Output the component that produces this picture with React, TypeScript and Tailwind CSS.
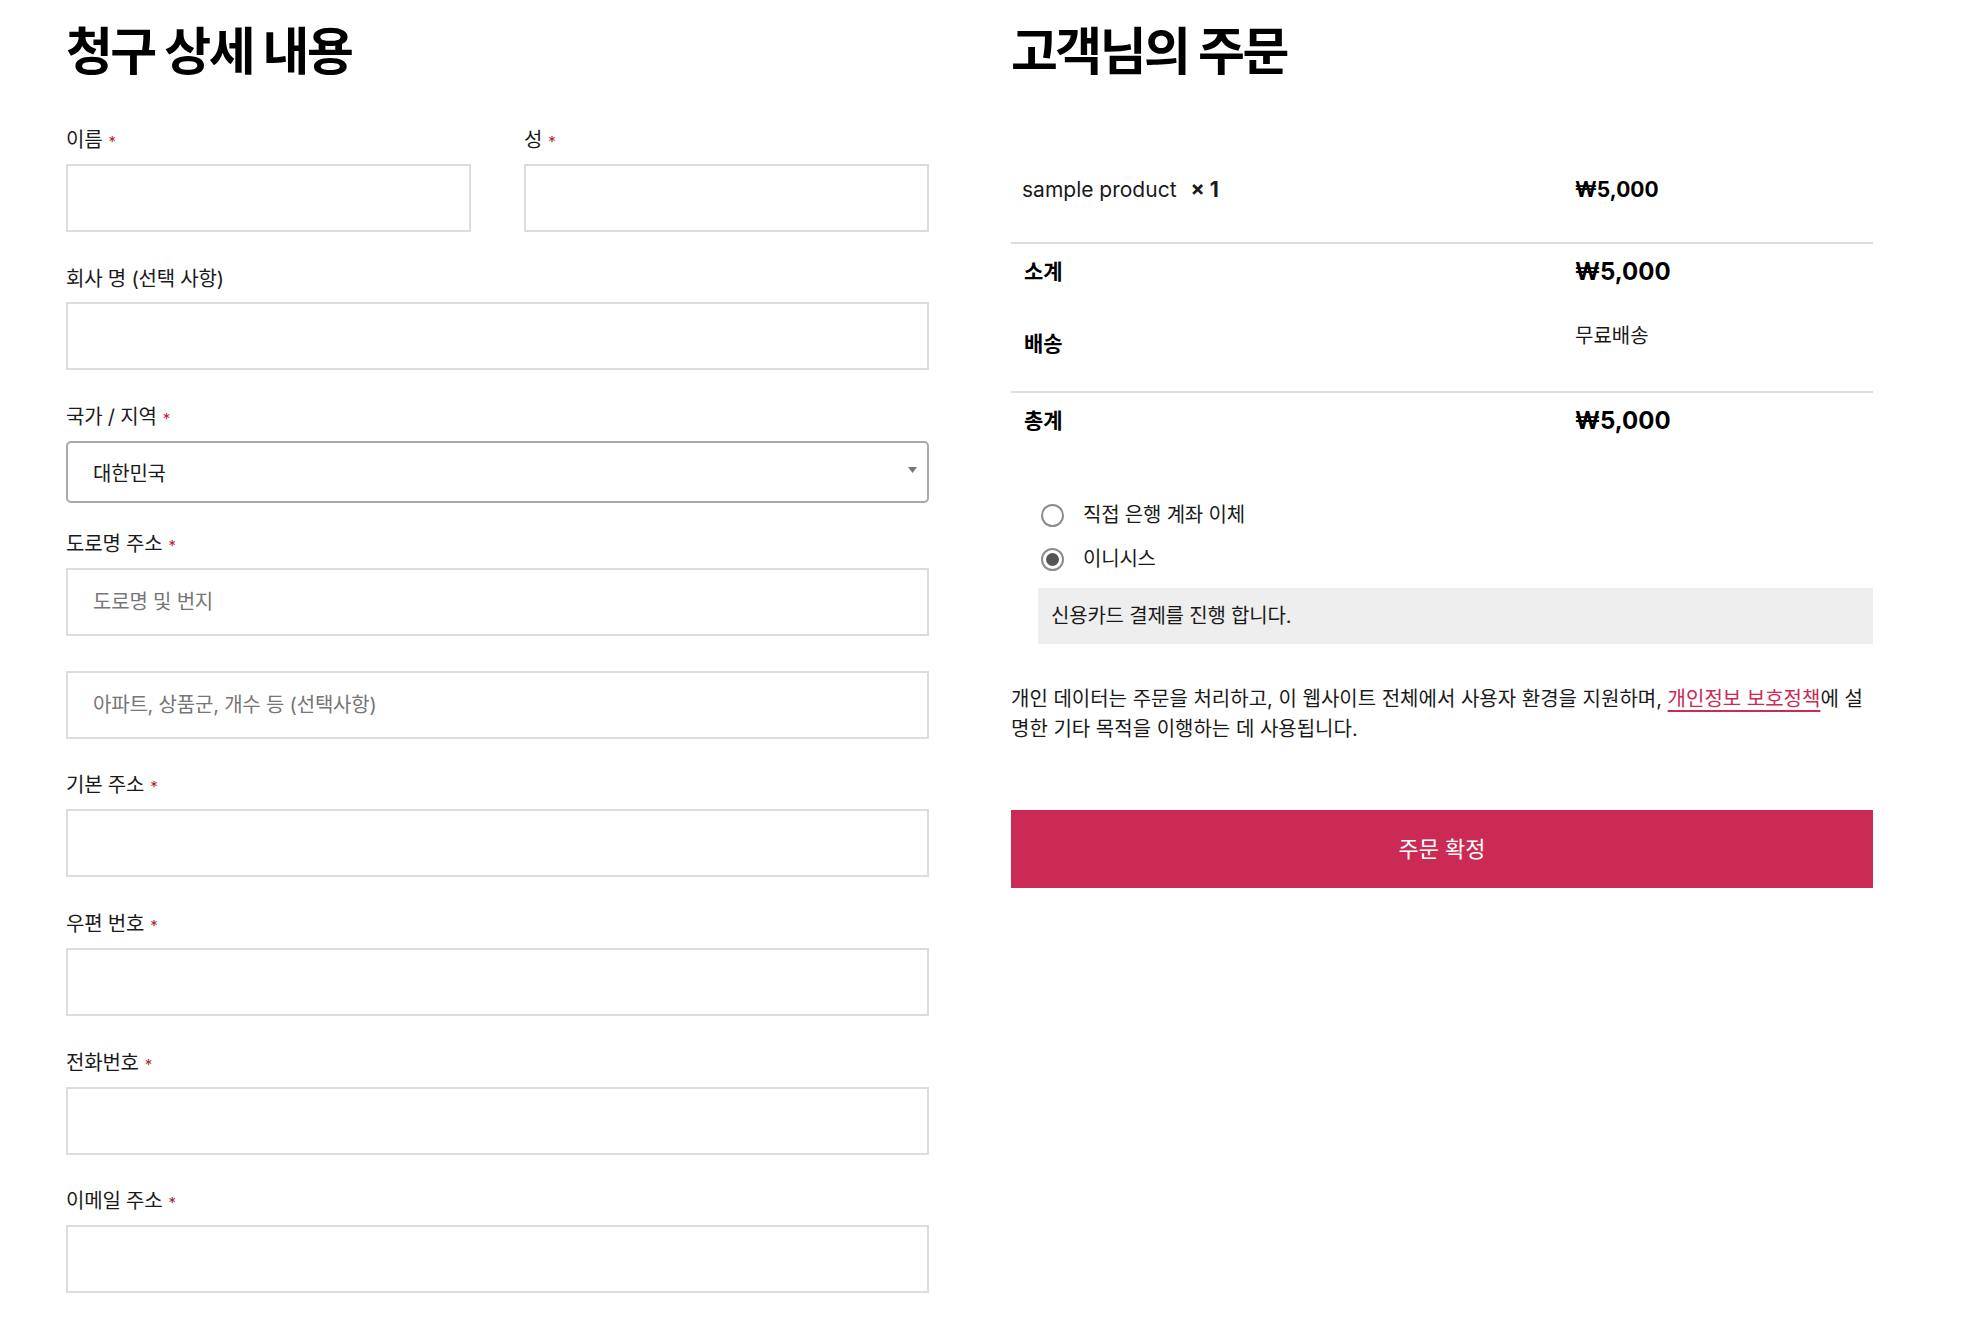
import React from "react";

const FONT = { fontFamily: 'Inter, "Noto Sans CJK KR", sans-serif' };

function Label({ text, required = true }: { text: string; required?: boolean }) {
  return (
    <div className="text-[20px] leading-[27px] text-[#1a1a1a] mb-[9px] tracking-[-0.01em]">
      {text}
      {required && <span className="text-[#b3262e] ml-[6px] text-[15px]">*</span>}
    </div>
  );
}

function Input({ placeholder }: { placeholder?: string }) {
  return (
    <div className="h-[68px] border-2 border-[#dddddd] bg-white flex items-center pl-[25px] text-[20px] tracking-[-0.01em] text-[#767676]">
      {placeholder}
    </div>
  );
}

function Field({ label, required = true, className = "" }: { label: string; required?: boolean; className?: string }) {
  return (
    <div className={className}>
      <Label text={label} required={required} />
      <Input />
    </div>
  );
}

function Radio({ checked, label }: { checked?: boolean; label: string }) {
  return (
    <div className="flex items-center h-[44px] pl-[30px]">
      <div className="w-[23px] h-[23px] rounded-full border-2 border-[#8c8c8c] flex items-center justify-center bg-white">
        {checked && <div className="w-[13px] h-[13px] rounded-full bg-[#555555]" />}
      </div>
      <span className="ml-[19px] text-[20px] tracking-[-0.01em] text-[#1a1a1a]">{label}</span>
    </div>
  );
}

export default function App() {
  return (
    <div style={FONT} className="w-[1966px] h-[1320px] bg-white overflow-hidden flex pl-[66px] text-black">
      {/* Left column */}
      <div className="w-[863px] shrink-0">
        <h1 className="text-[51px] leading-[58px] font-bold tracking-[-0.05em] pt-[23px] mb-[46px]">청구 상세 내용</h1>
        <div className="grid grid-cols-2 gap-x-[53px] mb-[34px]">
          <div>
            <Label text="이름" />
            <Input />
          </div>
          <div>
            <Label text="성" />
            <Input />
          </div>
        </div>
        <Field label="회사 명 (선택 사항)" required={false} className="mb-[34px]" />
        <div className="mb-[28px]">
          <Label text="국가 / 지역" />
          <div className="h-[62px] mt-[3px] border-2 border-[#aaaaaa] rounded-[5px] flex items-center justify-between pl-[25px] pr-[10px] text-[20px] tracking-[-0.01em] text-[#1a1a1a]">
            <span className="pt-[3px]">대한민국</span>
            <svg width="9" height="6" viewBox="0 0 9 6" className="-mt-[4px]">
              <polygon points="0,0 9,0 4.5,6" fill="#777777" />
            </svg>
          </div>
        </div>
        <div className="mb-[35px]">
          <Label text="도로명 주소" />
          <Input placeholder="도로명 및 번지" />
        </div>
        <div className="mb-[33px]">
          <Input placeholder="아파트, 상품군, 개수 등 (선택사항)" />
        </div>
        <Field label="기본 주소" className="mb-[34px]" />
        <Field label="우편 번호" className="mb-[34px]" />
        <Field label="전화번호" className="mb-[33px]" />
        <Field label="이메일 주소" />
      </div>

      {/* Right column */}
      <div className="w-[862px] shrink-0 ml-[82px]">
        <h2 className="text-[51px] leading-[58px] font-bold tracking-[-0.05em] pt-[23px]">고객님의 주문</h2>
        <div className="mt-[56px]">
          <div className="grid grid-cols-[564px_1fr] h-[107px] items-center border-b-2 border-[#dddddd]">
            <div className="pl-[11px] text-[21px] text-[#1a1a1a]">
              sample product <span className="font-bold ml-[8px]">×&nbsp;1</span>
            </div>
            <div className="text-[21px] font-bold">₩5,000</div>
          </div>
          <div className="grid grid-cols-[564px_1fr] h-[56px] items-center">
            <div className="pl-[13px] text-[21px] font-bold">소계</div>
            <div className="text-[24px] font-bold">₩5,000</div>
          </div>
          <div className="grid grid-cols-[564px_1fr] h-[93px] items-start border-b-2 border-[#dddddd]">
            <div className="pl-[13px] text-[21px] leading-[32px] font-bold mt-[28px]">배송</div>
            <div className="text-[20px] leading-[30px] text-[#1a1a1a] mt-[21px]">무료배송</div>
          </div>
          <div className="grid grid-cols-[564px_1fr] h-[56px] items-center">
            <div className="pl-[13px] text-[21px] font-bold">총계</div>
            <div className="text-[24px] font-bold">₩5,000</div>
          </div>
        </div>

        <div className="mt-[44px]">
          <Radio label="직접 은행 계좌 이체" />
          <Radio checked label="이니시스" />
          <div className="ml-[27px] mt-[7px] h-[56px] bg-[#eeeeee] flex items-center pl-[13px] text-[20px] tracking-[-0.01em] text-[#1a1a1a]">
            신용카드 결제를 진행 합니다.
          </div>
        </div>

        <p className="mt-[40px] text-[20px] leading-[30px] text-[#1a1a1a]">
          개인 데이터는 주문을 처리하고, 이 웹사이트 전체에서 사용자 환경을 지원하며,{" "}
          <span className="text-[#cb2a55] underline underline-offset-[4px] decoration-[2px]">개인정보 보호정책</span>에 설명한 기타 목적을 이행하는 데 사용됩니다.
        </p>

        <div className="mt-[66px] h-[78px] bg-[#cb2a55] flex items-center justify-center text-white text-[22px]">
          주문 확정
        </div>
      </div>
    </div>
  );
}
